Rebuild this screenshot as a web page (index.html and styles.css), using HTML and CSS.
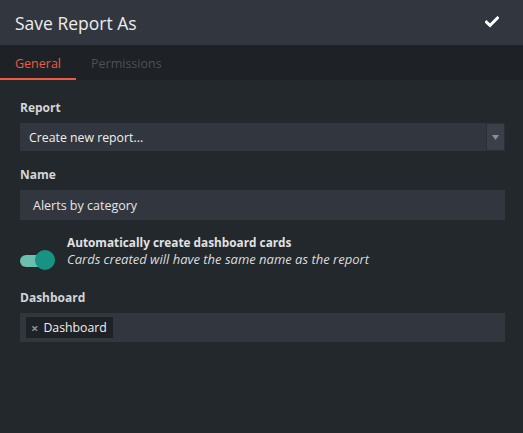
FILE: index.html
```html
<!DOCTYPE html>
<html>
<head>
<meta charset="utf-8">
<link rel="stylesheet" href="styles.css">
</head>
<body>
<div class="dialog">
  <div class="header">
    <div class="title">Save Report As</div>
    <svg class="check" width="14" height="12" viewBox="0 0 14 12"><path d="M1.5 6.2 L5 9.5 L12.5 2" fill="none" stroke="#ffffff" stroke-width="3" stroke-linecap="square"/></svg>
  </div>
  <div class="tabs">
    <div class="tab active">General</div>
    <div class="tab">Permissions</div>
  </div>
  <div class="content">
    <div class="field">
      <div class="label">Report</div>
      <div class="select">
        <span class="select-text">Create new report...</span>
        <span class="select-btn"><svg width="7" height="5" viewBox="0 0 7 5"><path d="M0 0 H7 L3.5 5 Z" fill="#8a8f96"/></svg></span>
      </div>
    </div>
    <div class="field">
      <div class="label">Name</div>
      <div class="input">Alerts by category</div>
    </div>
    <div class="toggle-row">
      <div class="toggle"><div class="track"></div><div class="knob"></div></div>
      <div class="toggle-text">
        <div class="toggle-title">Automatically create dashboard cards</div>
        <div class="toggle-desc">Cards created will have the same name as the report</div>
      </div>
    </div>
    <div class="field">
      <div class="label">Dashboard</div>
      <div class="tags">
        <span class="tag"><span class="tag-x">×</span>Dashboard</span>
      </div>
    </div>
  </div>
</div>
</body>
</html>
```
FILE: styles.css
```css
html, body {
  margin: 0;
  padding: 0;
  background: #23282c;
}
body {
  font-family: "Open Sans", "Lato", sans-serif;
  color: #e6e7e8;
  width: 523px;
  height: 433px;
  overflow: hidden;
}
.header {
  height: 45px;
  background: #31363f;
  display: flex;
  align-items: center;
  justify-content: space-between;
  padding: 0 24px 0 15px;
}
.title {
  font-size: 17.5px;
  color: #ececec;
}
.check {
  display: block;
  margin-top: -2px;
}
.tabs {
  height: 35px;
  background: #1e2125;
  display: flex;
}
.tab {
  padding: 0 15px;
  font-size: 12.5px;
  color: #4b5159;
  display: flex;
  align-items: center;
  box-sizing: border-box;
  height: 35px;
  padding-top: 1px;
}
.tab.active {
  color: #ef5a40;
  border-bottom: 2px solid #ef5a40;
  padding-top: 3px;
}
.content {
  padding: 20px 18px 0 20px;
  display: flex;
  flex-direction: column;
}
.field {
  display: flex;
  flex-direction: column;
}
.label {
  font-size: 12px;
  font-weight: 700;
  color: #d4d5d7;
  line-height: 15px;
  margin-bottom: 8px;
}
.select {
  height: 28px;
  background: #31363f;
  display: flex;
  align-items: center;
  justify-content: space-between;
  margin-bottom: 16px;
}
.select-text {
  font-size: 12.3px;
  padding-left: 9px;
  color: #f0f0f0;
}
.select-btn {
  width: 17px;
  height: 26px;
  background: #3a404a;
  border: 1px solid #2b3036;
  display: flex;
  align-items: center;
  justify-content: center;
}
.input {
  height: 30px;
  background: #31363f;
  font-size: 12.5px;
  color: #e6e6e6;
  padding-left: 13px;
  display: flex;
  align-items: center;
  margin-bottom: 14px;
}
.toggle-row {
  display: flex;
  align-items: flex-start;
  margin-bottom: 20px;
}
.toggle {
  position: relative;
  width: 35px;
  height: 20px;
  margin-right: 12px;
  margin-top: 16px;
}
.track {
  position: absolute;
  left: 0;
  top: 5px;
  width: 28px;
  height: 12px;
  border-radius: 6px;
  background: #6bbfae;
}
.knob {
  position: absolute;
  left: 15px;
  top: 0;
  width: 20px;
  height: 20px;
  border-radius: 50%;
  background: #179383;
}
.toggle-text {
  display: flex;
  flex-direction: column;
}
.toggle-title {
  font-size: 11.8px;
  font-weight: 700;
  color: #e0e1e2;
  line-height: 17px;
}
.toggle-desc {
  font-size: 13px;
  font-style: italic;
  color: #dcdcdc;
  line-height: 17px;
}
.tags {
  height: 29px;
  background: #31363f;
  display: flex;
  align-items: center;
  padding-left: 6px;
}
.tag {
  background: #1e2125;
  height: 21px;
  display: flex;
  align-items: center;
  padding: 0 6px 0 5px;
  font-size: 12.3px;
  color: #f0f0f0;
}
.tag-x {
  color: #8a8f96;
  font-size: 13px;
  font-weight: 700;
  margin-right: 5px;
}
```
